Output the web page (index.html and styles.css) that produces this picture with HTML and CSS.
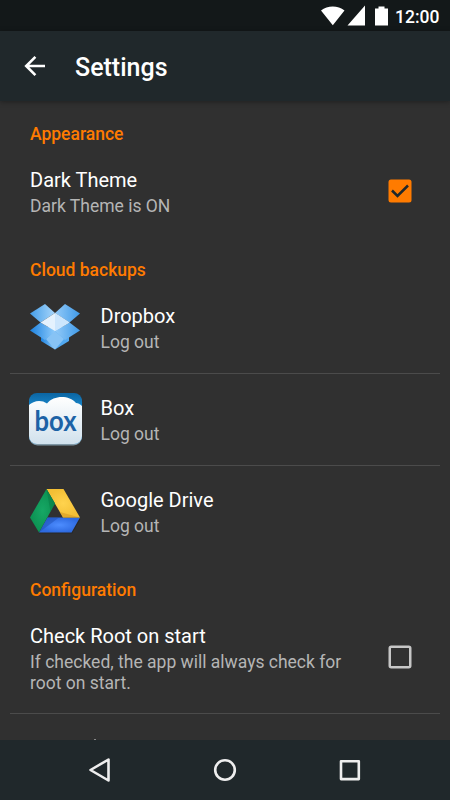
FILE: index.html
```html
<!DOCTYPE html>
<html lang="en">
<head>
	<meta charset="utf-8">
	<title>Settings</title>
	<link rel="stylesheet" href="styles.css">
</head>
<body>
<div class="statusbar">
	<svg width="72" height="22" viewBox="0 0 72 22">
		<path fill="#fff" d="M1 5.5C7.5 .2 18 .2 24.5 5.5L12.8 20.3zM45 .5V20.5H27.5zM55 3.5H58.5V1.5H64.5V3.5H68V20.5H55z"/>
	</svg>
	<span class="clock">12:00</span>
</div>
<header class="toolbar">
	<svg class="back" width="22" height="22" viewBox="0 0 22 22" fill="none" stroke="#fff" stroke-width="2.6">
		<path d="M21 11H3M11.4 1.8L2.2 11L11.4 20.2"/>
	</svg>
	<h1>Settings</h1>
</header>
<main>
	<h2>Appearance</h2>
	<div class="row">
		<div class="text">
			<div class="name">Dark Theme</div>
			<div class="info">Dark Theme is ON</div>
		</div>
		<svg class="check" width="24" height="24" viewBox="0 0 24 24">
			<rect x=".5" y=".5" width="23" height="23" rx="2.5" fill="#ff7b00"/>
			<path d="M4 11.5L9.5 17L20 6.5" fill="none" stroke="#20282b" stroke-width="2.5"/>
		</svg>
	</div>

	<h2>Cloud backups</h2>
	<div class="row line">
		<svg class="logo" width="60" height="60" viewBox="0 0 60 60">
			<defs>
				<linearGradient id="dbl"><stop offset="0" stop-color="#459ee8"/><stop offset="1" stop-color="#a8d6fb"/></linearGradient>
				<linearGradient id="dbr"><stop offset="0" stop-color="#93caf8"/><stop offset="1" stop-color="#3f9ae8"/></linearGradient>
				<linearGradient id="dbm"><stop offset="0" stop-color="#1d82df"/><stop offset="1" stop-color="#8ecbfb"/></linearGradient>
			</defs>
			<path fill="url(#dbm)" d="M16 34L30 26V52.5L16 44z"/>
			<path fill="#51a9f2" d="M44 34L30 26V52.5L44 44z"/>
			<path fill="#87c3f5" d="M30 34V52.5L21 42zM30 34V52.5L39 42z"/>
			<path fill="url(#dbl)" d="M5 16.5L20 7L30 16L15.5 25.5z"/>
			<path fill="url(#dbr)" d="M30 16L40 7L55 16.5L44.5 25.5z"/>
			<path fill="url(#dbm)" d="M5 33.5L15.5 25.5L30 34L20 43z"/>
			<path fill="url(#dbr)" d="M55 33.5L44.5 25.5L30 34L40 43z"/>
			<path fill="#e4f2fe" d="M30 16L44.5 25.5L30 34L15.5 25.5z"/>
			<path fill="#cce6fd" d="M30 16L44.5 25.5L30 34z"/>
		</svg>
		<div class="text">
			<div class="name">Dropbox</div>
			<div class="info">Log out</div>
		</div>
	</div>
	<div class="row line">
		<svg class="logo" width="60" height="60" viewBox="0 0 60 60">
			<defs>
				<linearGradient id="sky" x2="0" y2="1"><stop offset="0" stop-color="#0a629f"/><stop offset=".3" stop-color="#1b8bd0"/></linearGradient>
				<linearGradient id="cloud" x2="0" y2="1"><stop offset="0" stop-color="#fff"/><stop offset="1" stop-color="#cfe0ec"/></linearGradient>
				<clipPath id="tile"><rect x="4" y="4" width="53" height="51" rx="8"/></clipPath>
			</defs>
			<rect x="4" y="5" width="53" height="51.5" rx="8.5" fill="#7f97a5"/>
			<g clip-path="url(#tile)">
				<rect x="3" y="3" width="55" height="54" fill="url(#sky)"/>
				<path fill="url(#cloud)" d="M4 16C8 12 16 10 22 14.5C29 6 44 6 51 14C53 14 55 15 57 17V57H4z"/>
			</g>
			<text class="boxname" x="9.5" y="42" textLength="42" lengthAdjust="spacingAndGlyphs">box</text>
		</svg>
		<div class="text">
			<div class="name">Box</div>
			<div class="info">Log out</div>
		</div>
	</div>
	<div class="row">
		<svg class="logo" width="60" height="60" viewBox="0 0 60 60">
			<defs>
				<radialGradient id="blue"><stop offset="0" stop-color="#4d8dff"/><stop offset="1" stop-color="#2e6ae0"/></radialGradient>
				<radialGradient id="yellow"><stop offset="0" stop-color="#ffd34e"/><stop offset="1" stop-color="#f3bf35"/></radialGradient>
				<radialGradient id="green"><stop offset="0" stop-color="#16a865"/><stop offset="1" stop-color="#0c9152"/></radialGradient>
			</defs>
			<path fill="#222" opacity=".6" d="M14 52.5H47L55.5 38H22z"/>
			<path fill="url(#blue)" d="M14 51.5H46.5L55 36.5H22.5z"/>
			<path fill="url(#yellow)" d="M21.5 8H38.5L55 36.5H38z"/>
			<path fill="url(#green)" d="M21.5 8L30 22.5L14 51.5L5 36.5z"/>
			<path fill="#087a43" opacity=".5" d="M21.5 8L30 22.5L25.5 30.5z"/>
			<path fill="#d59b24" opacity=".6" d="M38 36.5H55L34.8 31z"/>
			<path fill="#1a4cae" opacity=".45" d="M14 51.5L22.5 36.5H34z"/>
		</svg>
		<div class="text">
			<div class="name">Google Drive</div>
			<div class="info">Log out</div>
		</div>
	</div>

	<h2>Configuration</h2>
	<div class="row line">
		<div class="text">
			<div class="name">Check Root on start</div>
			<div class="info">If checked, the app will always check for root on start.</div>
		</div>
		<svg class="check" width="24" height="24" viewBox="0 0 24 24">
			<rect x="1.75" y="1.75" width="20.5" height="20.5" rx="1.5" fill="none" stroke="#c6c6c6" stroke-width="2.5"/>
		</svg>
	</div>
	<!-- top of the next row, cut off by the nav bar -->
	<div class="peek"></div>
</main>
<nav>
	<svg width="24" height="26" viewBox="0 0 24 26"><path d="M2.5 13L20.5 2.5V23.5z"/></svg>
	<svg width="24" height="26" viewBox="0 0 24 26"><circle cx="12" cy="13" r="9.8"/></svg>
	<svg width="24" height="26" viewBox="0 0 24 26"><rect x="3" y="4.3" width="17.8" height="17.8"/></svg>
</nav>
</body>
</html>
```
FILE: styles.css
```css
* { box-sizing: border-box; }
body { display: flex; flex-direction: column; margin: 0; width: 450px; height: 800px; overflow: hidden; background: #303030; color: #fff; font-family: Roboto, sans-serif; }

.statusbar { display: flex; justify-content: flex-end; align-items: center; flex: none; height: 31px; padding: 0 10px 0 0; background: #131819; }
.statusbar svg { margin-top: 1px; }
.clock { width: 45px; margin-left: 3px; font-size: 17.5px; font-weight: 500; line-height: 20px; margin-top: 2px; white-space: nowrap; }

.toolbar { display: flex; align-items: center; flex: none; height: 70px; padding-left: 24px; background: #20282b; box-shadow: 0 1px 5px rgba(0,0,0,0.35); z-index: 1; }
.toolbar h1 { margin: 3px 0 0 29px; font-size: 25px; font-weight: 500; line-height: 30px; }

main { flex: 1; min-height: 0; overflow: hidden; }
h2 { height: 46px; margin: 0; padding: 21.5px 30px 0; color: #ff7b00; font-size: 17.5px; font-weight: 500; line-height: 22px; }
h2:first-child { height: 45px; padding-top: 22px; }

.row { display: flex; align-items: center; margin: 0 10px; padding: 20px 28px 20px 20px; min-height: 91.5px; }
.row + h2 { height: 45px; }
.row + .row + h2 { height: 46px; }
.line { border-bottom: 1px solid #4b4b4b; }
.text { flex: 1; }
.name { font-size: 20px; line-height: 27px; }
.info { max-width: 320px; color: #b5b5b5; font-size: 17.5px; line-height: 20.5px; padding-top: 2px; }
.logo { flex: none; margin: -6px 15.5px -5px -5px; }
.boxname { fill: #1c62a6; font-family: Lato, sans-serif; font-size: 28px; font-weight: bold; }
.check { flex: none; margin-top: -2px; }
.peek { width: 2px; height: 1px; margin: 24.5px 0 0 94px; background: #888; }

nav { display: flex; justify-content: center; align-items: center; flex: none; gap: 101px; height: 60px; background: #20282b; }
nav svg { fill: none; stroke: #eee; stroke-width: 2.6; stroke-linejoin: round; }
```
